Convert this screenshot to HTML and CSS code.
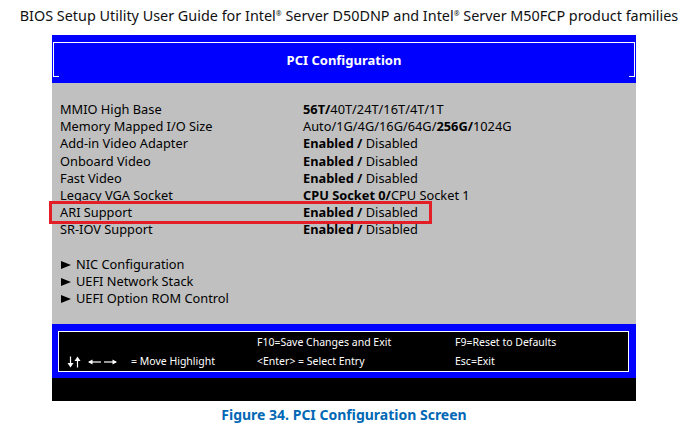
FILE: index.html
```html
<!DOCTYPE html>
<html lang="en">
<head>
<meta charset="utf-8">
<title>PCI Configuration Screen</title>
<link rel="stylesheet" href="styles.css">
</head>
<body>
<div class="doc-title">BIOS Setup Utility User Guide for Intel<sup>®</sup> Server D50DNP and Intel<sup>®</sup> Server M50FCP product families</div>
<div class="bios">
  <div class="bios-head">
    <div class="bracket">
      <div class="head-title">PCI Configuration</div>
      <div class="ticks"><span></span><span></span></div>
    </div>
  </div>
  <div class="bios-body">
    <div class="row"><span class="label">MMIO High Base</span><span class="value"><b>56T/</b>40T/24T/16T/4T/1T</span></div>
    <div class="row"><span class="label">Memory Mapped I/O Size</span><span class="value">Auto/1G/4G/16G/64G/<b>256G/</b>1024G</span></div>
    <div class="row"><span class="label">Add-in Video Adapter</span><span class="value"><b>Enabled /</b> Disabled</span></div>
    <div class="row"><span class="label">Onboard Video</span><span class="value"><b>Enabled /</b> Disabled</span></div>
    <div class="row"><span class="label">Fast Video</span><span class="value"><b>Enabled /</b> Disabled</span></div>
    <div class="row"><span class="label">Legacy VGA Socket</span><span class="value"><b>CPU Socket 0/</b>CPU Socket 1</span></div>
    <div class="row highlight"><span class="label">ARI Support</span><span class="value"><b>Enabled /</b> Disabled</span></div>
    <div class="row"><span class="label">SR-IOV Support</span><span class="value"><b>Enabled /</b> Disabled</span></div>
    <div class="row spacer"></div>
    <div class="row"><span class="submenu"><svg class="tri" width="16" height="10" viewBox="0 0 16 10"><path d="M1 1 L11 5 L1 9 Z" fill="#000"/></svg>NIC Configuration</span></div>
    <div class="row"><span class="submenu"><svg class="tri" width="16" height="10" viewBox="0 0 16 10"><path d="M1 1 L11 5 L1 9 Z" fill="#000"/></svg>UEFI Network Stack</span></div>
    <div class="row"><span class="submenu"><svg class="tri" width="16" height="10" viewBox="0 0 16 10"><path d="M1 1 L11 5 L1 9 Z" fill="#000"/></svg>UEFI Option ROM Control</span></div>
  </div>
  <div class="bios-foot">
    <div class="keys">
      <span class="k-arrows"></span>
      <span class="k-move"></span>
      <span class="k-save">F10=Save Changes and Exit</span>
      <span class="k-reset">F9=Reset to Defaults</span>
      <span class="k-arrows"><svg class="arrows" width="52" height="12" viewBox="0 0 52 12" aria-label="↓↑←→">
        <g fill="#fff" stroke="#fff" stroke-width="1.2">
          <line x1="3.5" y1="0.5" x2="3.5" y2="8"/>
          <path d="M0.5 7 L6.5 7 L3.5 11.5 Z" stroke="none"/>
          <line x1="10.5" y1="4" x2="10.5" y2="11.5"/>
          <path d="M7.5 5 L13.5 5 L10.5 0.5 Z" stroke="none"/>
          <line x1="22" y1="6" x2="34" y2="6"/>
          <path d="M21 6 L25.5 3.5 L25.5 8.5 Z" stroke="none"/>
          <line x1="37" y1="6" x2="49" y2="6"/>
          <path d="M50 6 L45.5 3.5 L45.5 8.5 Z" stroke="none"/>
        </g>
      </svg></span>
      <span class="k-move">= Move Highlight</span>
      <span class="k-save">&lt;Enter&gt; = Select Entry</span>
      <span class="k-reset">Esc=Exit</span>
    </div>
  </div>
  <div class="bios-bottom"></div>
</div>
<div class="caption">Figure 34. PCI Configuration Screen</div>
</body>
</html>
```

FILE: styles.css
```css
html, body {
  margin: 0;
  padding: 0;
  background: #ffffff;
}

body {
  font-family: "Noto Sans", "DejaVu Sans", sans-serif;
  color: #000;
}

.doc-title {
  box-sizing: border-box;
  height: 35px;
  padding: 8px 0 0 10px;
  font-size: 14.4px;
  line-height: 16px;
  text-align: center;
  white-space: nowrap;
  color: #111;
}

.doc-title sup {
  font-size: 7px;
  vertical-align: 5px;
  line-height: 0;
}

.bios {
  width: 584px;
  margin: 0 auto;
}

.bios-head {
  background: #0000ff;
  height: 48px;
  padding: 7px 1px 0 1px;
  box-sizing: border-box;
}

.bracket {
  height: 35px;
  border: 1px solid #ffffff;
  border-bottom: none;
  box-sizing: border-box;
  display: flex;
  flex-direction: column;
}

.head-title {
  flex: 1;
  display: flex;
  align-items: center;
  justify-content: center;
  padding-top: 1px;
  color: #ffffff;
  font-weight: 700;
  font-size: 13px;
}

.ticks {
  display: flex;
  justify-content: space-between;
  height: 1px;
}

.ticks span {
  width: 5px;
  height: 1px;
  background: #ffffff;
}

.bios-body {
  background: #c0c0c0;
  height: 241px;
  box-sizing: border-box;
  padding: 18px 0 0 8px;
  font-size: 12.8px;
  line-height: 17.2px;
}

.row {
  position: relative;
  display: flex;
  height: 17.2px;
}

.label {
  width: 243px;
  flex: none;
}

.value b {
  font-weight: 700;
}

.submenu {
  display: flex;
  align-items: center;
}

.submenu .tri {
  display: block;
  flex: none;
  margin-top: 1px;
}

.highlight::after {
  content: "";
  position: absolute;
  left: -11px;
  top: -3px;
  width: 383px;
  height: 23px;
  box-sizing: border-box;
  border: 3px solid #e31e26;
}

.bios-foot {
  background: #0000ff;
  height: 54px;
  box-sizing: border-box;
  padding: 7px 7px 6px 6px;
}

.keys {
  height: 41px;
  box-sizing: border-box;
  border: 1px solid #ffffff;
  background: #000000;
  color: #ffffff;
  font-size: 10.5px;
  line-height: 18px;
  display: grid;
  grid-template-columns: 64px 126px 198px 1fr;
  padding: 1px 0 0 8px;
}

.k-arrows {
  display: flex;
  align-items: center;
}

.arrows {
  display: block;
}

.bios-bottom {
  background: #000000;
  height: 23px;
}

.caption {
  margin-top: 4px;
  text-align: center;
  font-size: 14px;
  font-weight: 700;
  color: #0068b5;
  line-height: 20px;
}
```
